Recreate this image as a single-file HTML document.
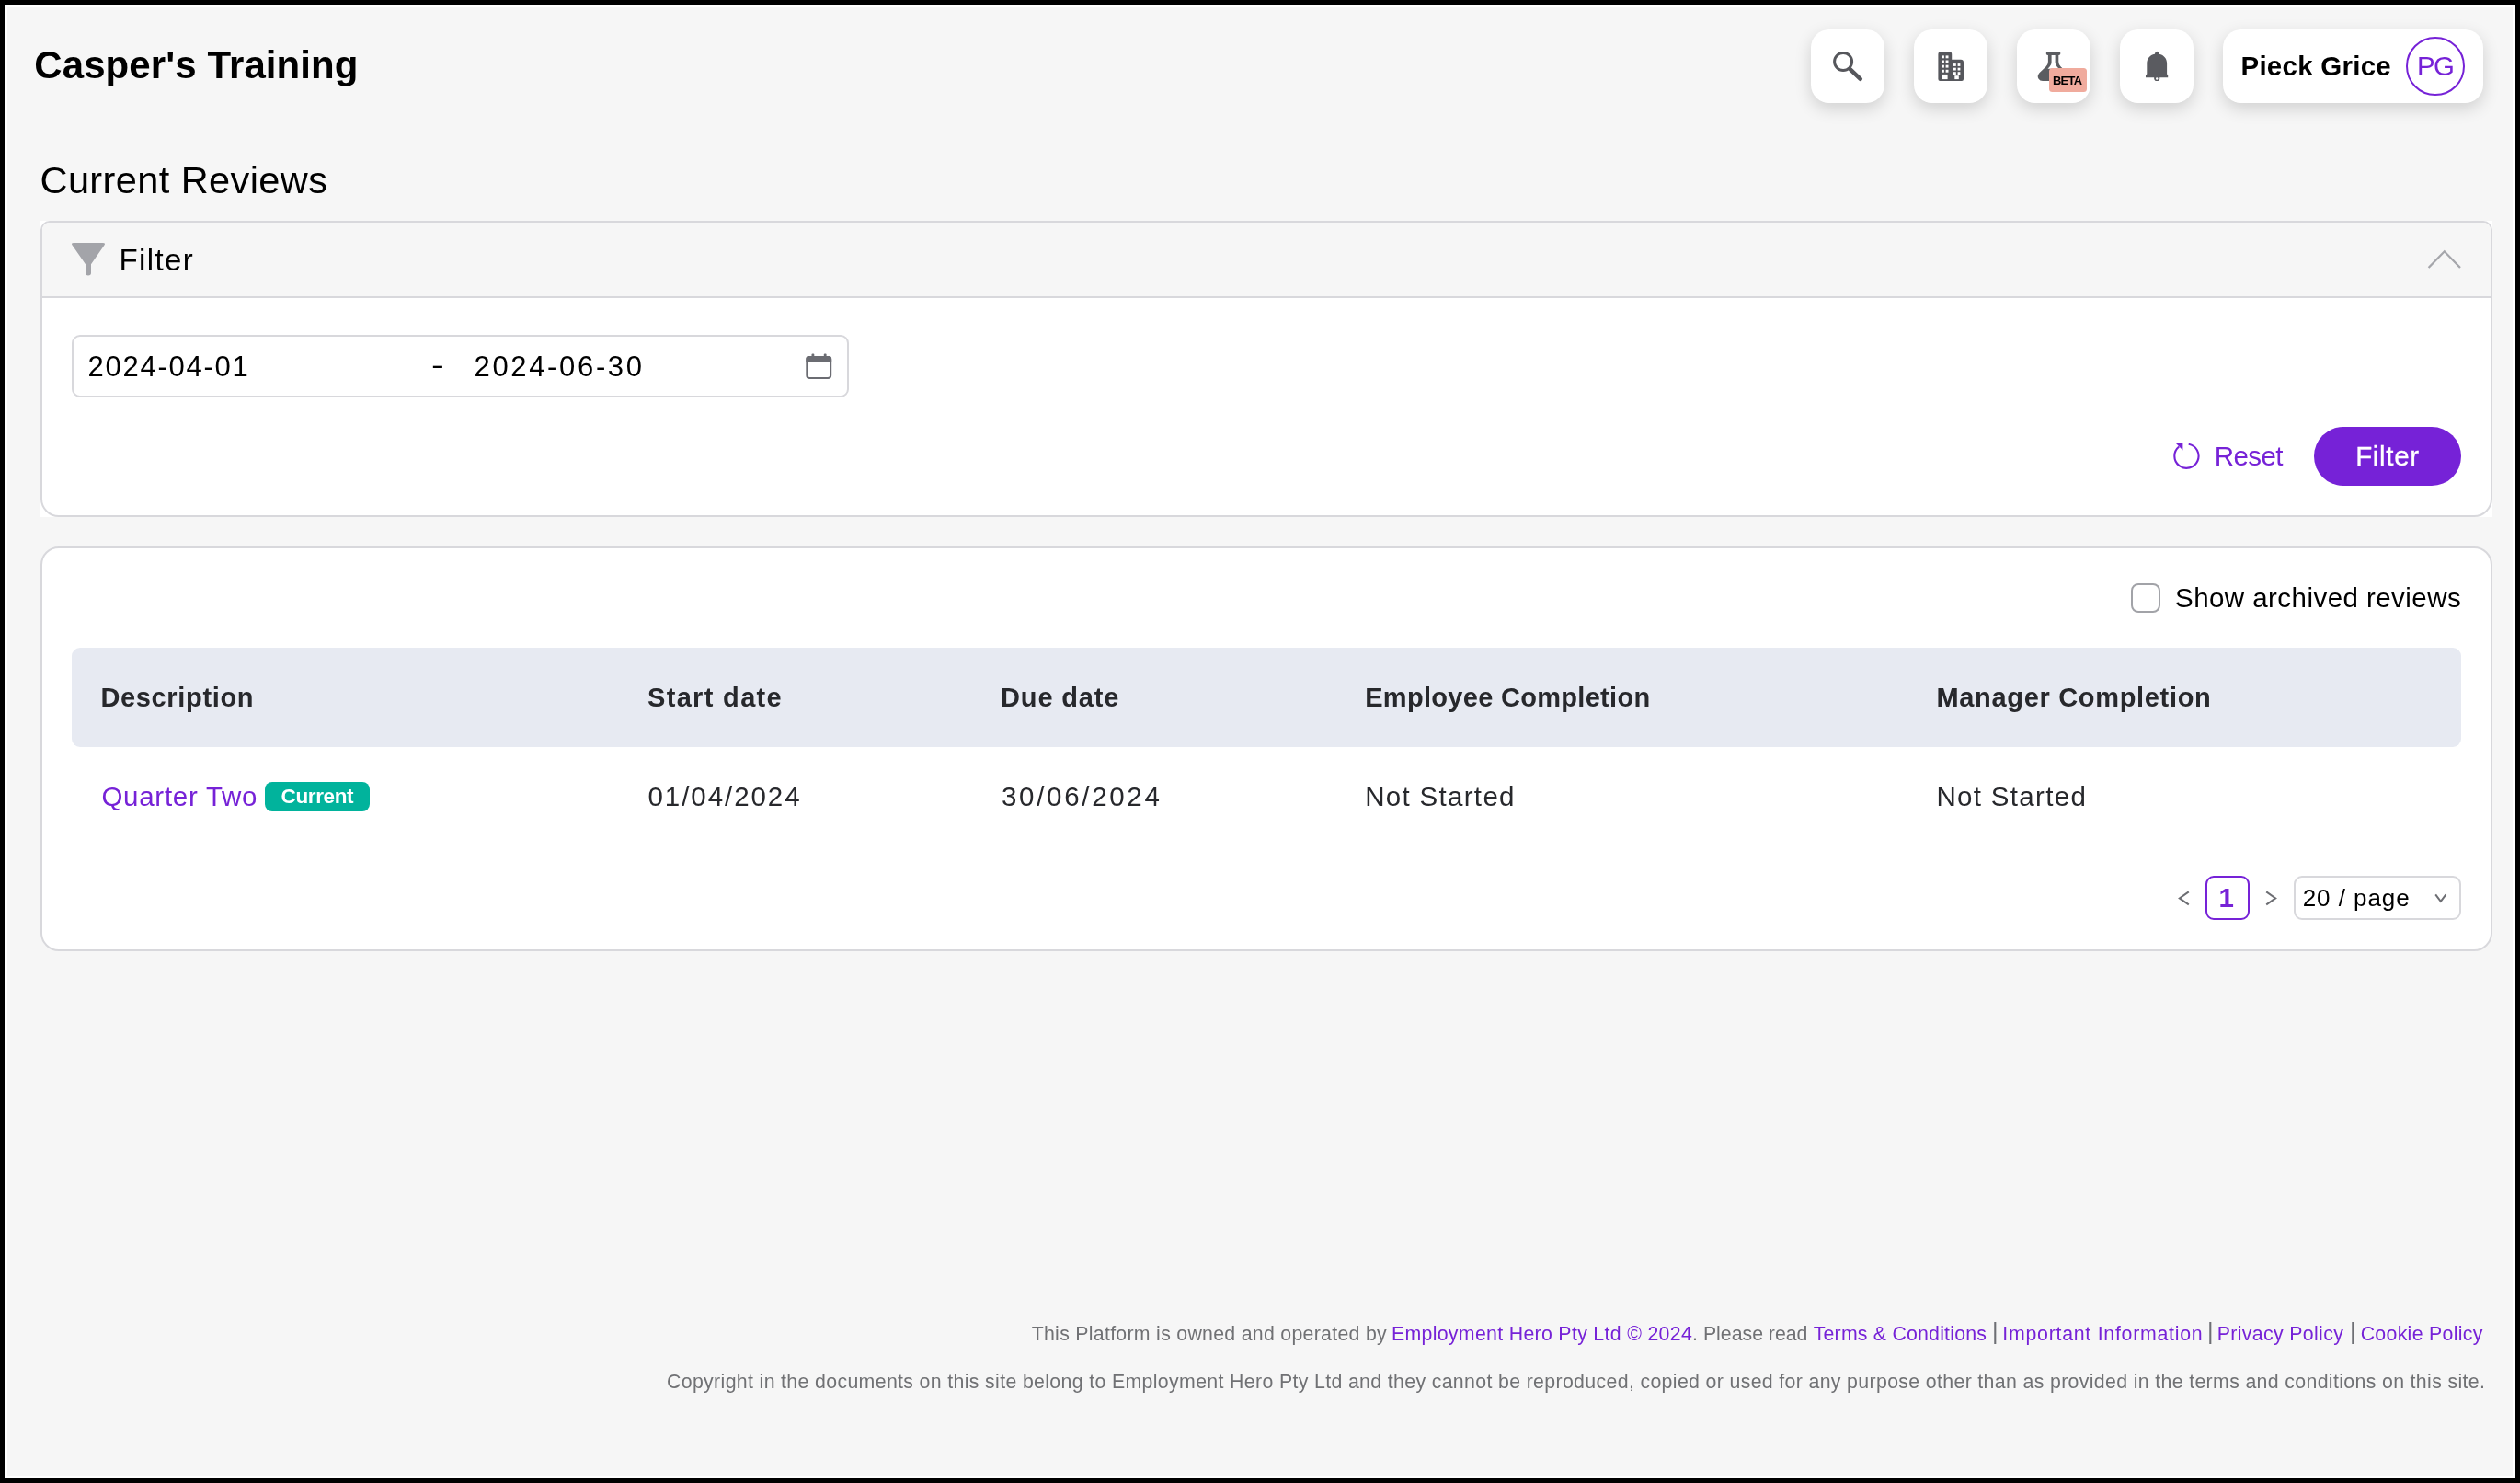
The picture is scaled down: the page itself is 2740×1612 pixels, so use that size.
<!DOCTYPE html>
<html lang="en">
<head>
<meta charset="utf-8">
<title>Current Reviews</title>
<style>
*{box-sizing:border-box;margin:0;padding:0}
html,body{width:2740px;height:1612px;overflow:hidden;background:#000}
body{font-family:"Liberation Sans",sans-serif;color:#000;position:relative}
#frame{position:absolute;left:5px;top:5px;width:2730px;height:1602px;background:#fff}
#page{position:absolute;left:8px;top:8px;width:2724px;height:1596px;background:#f6f6f6;overflow:hidden}
#c{position:absolute;left:-8px;top:-8px;width:2740px;height:1612px;will-change:transform}
.abs{position:absolute;display:block;white-space:nowrap;line-height:1;text-decoration:none}
.ibtn{position:absolute;top:32px;width:80px;height:80px;border-radius:20px;background:#fff;box-shadow:0 6px 18px rgba(0,0,0,.155)}
.box{position:absolute}
svg{position:absolute;left:0;top:0;overflow:visible}
</style>
</head>
<body>
<div id="frame"></div>
<div id="page"><div id="c">

<!-- header buttons -->
<div class="ibtn" style="left:1969px"></div>
<div class="ibtn" style="left:2081px"></div>
<div class="ibtn" style="left:2193px"></div>
<div class="ibtn" style="left:2305px"></div>
<div class="ibtn" style="left:2417px;width:283px"></div>
<div class="box" style="left:2616px;top:40px;width:64px;height:64px;border:2px solid #7622d7;border-radius:50%"></div>

<!-- filter card -->
<div class="box" style="left:44px;top:240px;width:2666px;height:322px;background:#fff"></div>
<div class="box" id="fcard" style="left:44px;top:240px;width:2666px;height:322px;border:2px solid #d8d8dc;border-radius:10px 10px 20px 20px;background:#fff;overflow:hidden">
  <div style="position:absolute;left:0;top:0;width:100%;height:82px;background:#f6f6f6;border-bottom:2px solid #d8d8dc"></div>
</div>
<div class="box" style="left:78px;top:364px;width:845px;height:68px;border:2px solid #d8d8dc;border-radius:9px;background:#fff"></div>
<div class="box" style="left:2516px;top:464px;width:160px;height:64px;border-radius:32px;background:#7622d7"></div>

<!-- table card -->
<div class="box" id="tcard" style="left:44px;top:594px;width:2666px;height:440px;border:2px solid #d8d8dc;border-radius:20px;background:#fff"></div>
<div class="box" style="left:2317px;top:634px;width:32px;height:32px;border:2px solid #a2a3a8;border-radius:8px;background:#fff"></div>
<div class="box" style="left:78px;top:704px;width:2598px;height:108px;background:#e7eaf2;border-radius:9px"></div>
<div class="box" style="left:288px;top:850px;width:114px;height:32px;border-radius:8px;background:#01b39c"></div>
<div class="box" style="left:2398px;top:952px;width:48px;height:48px;border:2px solid #7622d7;border-radius:9px;background:#fff"></div>
<div class="box" style="left:2494px;top:952px;width:182px;height:48px;border:2px solid #d8d8dc;border-radius:9px;background:#fff"></div>


<!-- icons -->
<svg width="2740" height="1612" viewBox="0 0 2740 1612">
  <!-- search -->
  <g fill="none" stroke="#56575c" stroke-linecap="round">
    <circle cx="2004.1" cy="67" r="9.5" stroke-width="3"/>
    <path d="M2011.8 75.4 L2022.8 85.8" stroke-width="4.5"/>
  </g>
  <!-- building -->
  <g>
    <path fill="#56575c" d="M2107.4 59 Q2107.4 56 2110.4 56 L2119.2 56 Q2122.2 56 2122.2 59 L2122.2 64.7 L2132 64.7 Q2135 64.7 2135 67.7 L2135 86 Q2135 88 2133 88 L2109.4 88 Q2107.4 88 2107.4 86 Z"/>
    <g fill="#fff">
      <rect x="2111" y="60.4" width="2.9" height="2.9"/><rect x="2115.6" y="60.4" width="2.9" height="2.9"/>
      <rect x="2111" y="65.5" width="2.9" height="2.9"/><rect x="2115.6" y="65.5" width="2.9" height="2.9"/>
      <rect x="2111" y="70.7" width="2.9" height="2.9"/><rect x="2115.6" y="70.7" width="2.9" height="2.9"/>
      <rect x="2111" y="75.8" width="2.9" height="2.9"/><rect x="2115.6" y="75.8" width="2.9" height="2.9"/>
      <rect x="2111.9" y="80.9" width="5.7" height="5.2"/>
      <rect x="2124" y="69.1" width="2.8" height="2.8"/><rect x="2128.6" y="69.1" width="2.8" height="2.8"/>
      <rect x="2124" y="73.7" width="2.8" height="2.8"/><rect x="2128.6" y="73.7" width="2.8" height="2.8"/>
      <rect x="2124" y="78.2" width="2.8" height="2.8"/><rect x="2128.6" y="78.2" width="2.8" height="2.8"/>
      <rect x="2125.3" y="82.2" width="4.5" height="3.9"/>
    </g>
  </g>
  <!-- flask -->
  <g>
    <rect x="2224.7" y="56" width="15.7" height="4" rx="2" fill="#5b5d61"/>
    <path fill="#5b5d61" d="M2226.9 58 L2226.9 67 Q2226.9 70 2224.5 72.6 L2217.4 79.2 Q2214.6 82.6 2216.4 85.4 Q2218 87.9 2221 87.9 L2244.2 87.9 Q2247.2 87.9 2248.8 85.4 Q2250.6 82.6 2247.8 79.2 L2240.7 72.6 Q2238.3 70 2238.3 67 L2238.3 58 Z"/>
    <path fill="#fff" d="M2230.6 60 L2230.6 67.5 Q2230.6 70.6 2228.6 72.6 L2226.5 74.8 L2238.7 74.8 L2236.6 72.6 Q2234.6 70.6 2234.6 67.5 L2234.6 60 Z"/>
  </g>
  <!-- bell -->
  <g fill="#5a5b60">
    <circle cx="2345.2" cy="85" r="3.1"/>
    <path d="M2345.2 55.8 Q2347.3 56.4 2347.5 58.7 C2353.2 59.8 2356.1 63.8 2356.1 69.2 L2356.1 80.6 L2357.2 81.8 L2357.2 84.2 L2333 84.2 L2333 81.8 L2334.3 80.6 L2334.3 69.2 C2334.3 63.8 2337.2 59.8 2342.9 58.7 Q2343.1 56.4 2345.2 55.8 Z"/>
    <circle cx="2345.2" cy="85.5" r="1.2" fill="#fff"/>
  </g>
  <!-- funnel -->
  <path fill="#a3a4a9" d="M80 264 L112 264 Q115.2 264 113.4 266.6 L99 287.2 L99 296.8 Q99 299.5 96 299.5 Q93 299.5 93 296.8 L93 287.2 L78.6 266.6 Q76.8 264 80 264 Z"/>
  <!-- chevron up -->
  <path fill="none" stroke="#a5a6ab" stroke-width="2.3" d="M2640.6 291 L2657.8 273.3 L2675 291"/>
  <!-- calendar -->
  <g>
    <rect x="877.3" y="388" width="25.9" height="23" rx="3" fill="none" stroke="#6b6c72" stroke-width="2"/>
    <path fill="#6b6c72" d="M876.3 394 L876.3 390 Q876.3 387 879.3 387 L901.2 387 Q904.2 387 904.2 390 L904.2 394 Z"/>
    <rect x="882.5" y="384.4" width="2.8" height="4" rx="1" fill="#6b6c72"/>
    <rect x="895.8" y="384.4" width="2.8" height="4" rx="1" fill="#6b6c72"/>
  </g>
  <!-- reset icon -->
  <g>
    <path fill="none" stroke="#7622d7" stroke-width="2.1" d="M2379.7 482.8 A13.1 13.1 0 1 1 2369.2 485.5"/>
    <path fill="#7622d7" d="M2366 482 L2373.4 482 L2373.4 489.6 Z"/>
  </g>
  <!-- pagination chevrons -->
  <g fill="none" stroke="#6d6e73" stroke-width="2">
    <path d="M2379.8 969.4 L2369.8 976.4 L2379.8 983.4"/>
    <path d="M2464.2 969.4 L2474.2 976.4 L2464.2 983.4"/>
    <path d="M2648.2 972.3 L2653.8 979.8 L2659.4 972.3"/>
  </g>
</svg>

<div class="box" style="left:2228.1px;top:74.3px;width:40.7px;height:25.5px;border-radius:3.5px;background:#f0ab9d"></div>
<h1 class="abs" id="title" style="left:37.3px;top:50.0px;font-size:42px;font-weight:700;color:#000;letter-spacing:0.09px;">Casper&#x27;s Training</h1>
<div class="abs" id="uname" style="left:2436.5px;top:57.0px;font-size:29.5px;font-weight:700;color:#000;letter-spacing:0.25px;">Pieck Grice</div>
<div class="abs" id="avt" style="left:2628.0px;top:57.0px;font-size:29.4px;font-weight:400;color:#7622d7;letter-spacing:-1.50px;">PG</div>
<h2 class="abs" id="h1" style="left:43.5px;top:175.0px;font-size:41.5px;font-weight:400;color:#000;letter-spacing:0.41px;">Current Reviews</h2>
<div class="abs" id="ftitle" style="left:129.5px;top:266.0px;font-size:33px;font-weight:400;color:#000;letter-spacing:1.38px;">Filter</div>
<div class="abs" id="d1" style="left:95.4px;top:383.0px;font-size:31px;font-weight:400;color:#000;letter-spacing:1.76px;">2024-04-01</div>
<div class="abs" id="dsep" style="left:470.6px;top:382.0px;font-size:29.5px;font-weight:400;color:#000;letter-spacing:0.00px;transform:scaleX(1.4);transform-origin:50% 50%">-</div>
<div class="abs" id="d2" style="left:515.5px;top:383.0px;font-size:31px;font-weight:400;color:#000;letter-spacing:2.66px;">2024-06-30</div>
<div class="abs" id="reset" style="left:2407.7px;top:481.0px;font-size:29.5px;font-weight:400;color:#7622d7;letter-spacing:-0.55px;">Reset</div>
<div class="abs" id="fbtnt" style="left:2561.2px;top:481.0px;font-size:29.5px;font-weight:400;color:#fff;letter-spacing:0.66px;-webkit-text-stroke:0.3px #fff">Filter</div>
<div class="abs" id="cbl" style="left:2365.0px;top:635.0px;font-size:29.5px;font-weight:400;color:#000;letter-spacing:0.45px;">Show archived reviews</div>
<div class="abs" id="th1" style="left:109.4px;top:744.0px;font-size:29px;font-weight:700;color:#27282c;letter-spacing:0.66px;">Description</div>
<div class="abs" id="th2" style="left:704.0px;top:744.0px;font-size:29px;font-weight:700;color:#27282c;letter-spacing:1.33px;">Start date</div>
<div class="abs" id="th3" style="left:1088.0px;top:744.0px;font-size:29px;font-weight:700;color:#27282c;letter-spacing:0.86px;">Due date</div>
<div class="abs" id="th4" style="left:1484.2px;top:744.0px;font-size:29px;font-weight:700;color:#27282c;letter-spacing:0.30px;">Employee Completion</div>
<div class="abs" id="th5" style="left:2105.4px;top:744.0px;font-size:29px;font-weight:700;color:#27282c;letter-spacing:0.68px;">Manager Completion</div>
<a class="abs" id="td1" style="left:110.4px;top:851.0px;font-size:29.5px;font-weight:400;color:#7622d7;letter-spacing:0.73px;">Quarter Two</a>
<div class="abs" id="badget" style="left:305.6px;top:855.0px;font-size:22.5px;font-weight:700;color:#fff;letter-spacing:-0.38px;">Current</div>
<div class="abs" id="td2" style="left:704.5px;top:851.0px;font-size:29.5px;font-weight:400;color:#27282c;letter-spacing:1.94px;">01/04/2024</div>
<div class="abs" id="td3" style="left:1089.0px;top:851.0px;font-size:29.5px;font-weight:400;color:#27282c;letter-spacing:2.69px;">30/06/2024</div>
<div class="abs" id="td4" style="left:1484.2px;top:851.0px;font-size:29.5px;font-weight:400;color:#27282c;letter-spacing:1.31px;">Not Started</div>
<div class="abs" id="td5" style="left:2105.4px;top:851.0px;font-size:29.5px;font-weight:400;color:#27282c;letter-spacing:1.33px;">Not Started</div>
<div class="abs" id="pcurt" style="left:2412.6px;top:961.0px;font-size:29.5px;font-weight:700;color:#7622d7;letter-spacing:0.00px;">1</div>
<div class="abs" id="pselt" style="left:2503.7px;top:963.0px;font-size:26px;font-weight:400;color:#000;letter-spacing:0.94px;">20 / page</div>
<div class="abs" id="beta" style="left:2231.9px;top:82.0px;font-size:12.9px;font-weight:700;color:#000;letter-spacing:-0.63px;">BETA</div>
<div class="abs" id="f1a" style="left:1121.7px;top:1440.0px;font-size:21.3px;font-weight:400;color:#707174;letter-spacing:0.29px;">This Platform is owned and operated by</div>
<a class="abs" id="f1b" style="left:1512.9px;top:1440.0px;font-size:21.3px;font-weight:400;color:#7622d7;letter-spacing:0.32px;">Employment Hero Pty Ltd © 2024</a>
<div class="abs" id="f1c" style="left:1840.1px;top:1440.0px;font-size:21.3px;font-weight:400;color:#707174;letter-spacing:-0.01px;">. Please read</div>
<a class="abs" id="f1d" style="left:1971.7px;top:1440.0px;font-size:21.3px;font-weight:400;color:#7622d7;letter-spacing:0.21px;">Terms &amp; Conditions</a>
<a class="abs" id="f1e" style="left:2177.3px;top:1440.0px;font-size:21.3px;font-weight:400;color:#7622d7;letter-spacing:0.75px;">Important Information</a>
<a class="abs" id="f1f" style="left:2410.7px;top:1440.0px;font-size:21.3px;font-weight:400;color:#7622d7;letter-spacing:0.35px;">Privacy Policy</a>
<a class="abs" id="f1g" style="left:2566.7px;top:1440.0px;font-size:21.3px;font-weight:400;color:#7622d7;letter-spacing:0.30px;">Cookie Policy</a>
<div class="abs" id="sep1" style="left:2165.9px;top:1435.0px;font-size:25.4px;font-weight:400;color:#6e6f74;letter-spacing:0.00px;">|</div>
<div class="abs" id="sep2" style="left:2399.9px;top:1435.0px;font-size:25.4px;font-weight:400;color:#6e6f74;letter-spacing:0.00px;">|</div>
<div class="abs" id="sep3" style="left:2554.9px;top:1435.0px;font-size:25.4px;font-weight:400;color:#6e6f74;letter-spacing:0.00px;">|</div>
<div class="abs" id="f2" style="left:725.0px;top:1492.0px;font-size:21.3px;font-weight:400;color:#707174;letter-spacing:0.35px;">Copyright in the documents on this site belong to Employment Hero Pty Ltd and they cannot be reproduced, copied or used for any purpose other than as provided in the terms and conditions on this site.</div>

</div></div>
</body>
</html>
